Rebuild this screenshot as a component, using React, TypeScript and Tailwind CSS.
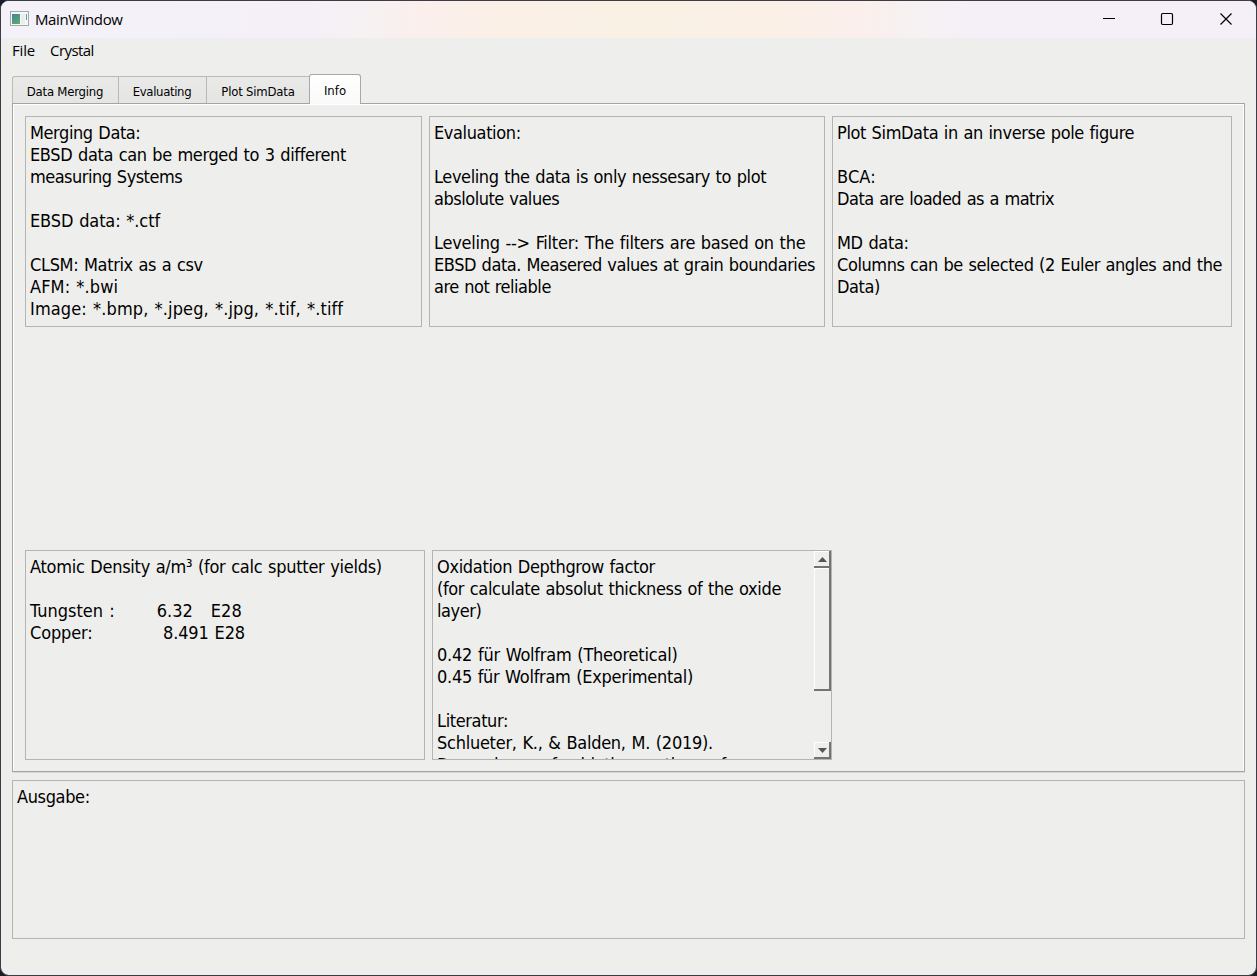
import React from "react";

type Line = [text: string, spacing?: string];

const tabs = [
  { label: "Data Merging", box: "w-[107px] rounded-tl-[3px] border-x", spacing: "tracking-[-0.22px]" },
  { label: "Evaluating", box: "w-[88px] border-r", spacing: "tracking-[-0.35px]" },
  { label: "Plot SimData", box: "w-[103px]", spacing: "tracking-[-0.2px]" },
];

const mergingLines: Line[] = [
  ["Merging Data:", "tracking-[-0.41px]"],
  ["EBSD data can be merged to 3 different", "tracking-[-0.36px]"],
  ["measuring Systems", "tracking-[-0.52px]"],
  [""],
  ["EBSD data: *.ctf", "tracking-[-0.12px]"],
  [""],
  ["CLSM: Matrix as a csv", "tracking-[-0.35px]"],
  ["AFM: *.bwi", "tracking-[0.11px]"],
  ["Image: *.bmp, *.jpeg, *.jpg, *.tif, *.tiff", "tracking-[0.12px]"],
];

const evaluationLines: Line[] = [
  ["Evaluation:", "tracking-[-0.38px]"],
  [""],
  ["Leveling the data is only nessesary to plot", "tracking-[-0.39px]"],
  ["abslolute values", "tracking-[-0.48px]"],
  [""],
  ["Leveling --> Filter: The filters are based on the", "tracking-[-0.26px]"],
  ["EBSD data. Measered values at grain boundaries", "tracking-[-0.44px]"],
  ["are not reliable", "tracking-[-0.48px]"],
];

const simDataLines: Line[] = [
  ["Plot SimData in an inverse pole figure", "tracking-[-0.38px]"],
  [""],
  ["BCA:", "tracking-[0.1px]"],
  ["Data are loaded as a matrix", "tracking-[-0.5px]"],
  [""],
  ["MD data:", "tracking-[-0.35px]"],
  ["Columns can be selected (2 Euler angles and the", "tracking-[-0.42px]"],
  ["Data)", "tracking-[-0.4px]"],
];

const densityLines: Line[] = [
  ["Atomic Density a/m³ (for calc sputter yields)", "tracking-[-0.27px]"],
  [""],
  ["Tungsten :       6.32   E28", "tracking-[0.02px]"],
  ["Copper:            8.491 E28", "tracking-[-0.13px]"],
];

const oxidationLines: Line[] = [
  ["Oxidation Depthgrow factor", "tracking-[-0.33px]"],
  ["(for calculate absolut thickness of the oxide", "tracking-[-0.35px]"],
  ["layer)", "tracking-[-0.42px]"],
  [""],
  ["0.42 für Wolfram (Theoretical)", "tracking-[-0.22px]"],
  ["0.45 für Wolfram (Experimental)", "tracking-[-0.28px]"],
  [""],
  ["Literatur:", "tracking-[-0.38px]"],
  ["Schlueter, K., & Balden, M. (2019).", "tracking-[-0.26px]"],
  ["Dependence of oxidation on the surface", "tracking-[-0.33px]"],
];

function TextLines({ lines }: { lines: Line[] }) {
  return (
    <div className="overflow-hidden pl-1 pt-[5px] text-lg leading-[22px] [word-spacing:0.85px]">
      {lines.map(([text, spacing = ""], i) => (
        <div key={i} className={`h-[22px] whitespace-pre ${spacing}`}>
          {text}
        </div>
      ))}
    </div>
  );
}

function TextPanel({ className, lines }: { className: string; lines: Line[] }) {
  return (
    <div className={`shrink-0 overflow-hidden border border-[#b4b4b4] ${className}`}>
      <TextLines lines={lines} />
    </div>
  );
}

function ScrollButton({ down = false }: { down?: boolean }) {
  return (
    <div className="flex h-[17px] w-[17px] items-center justify-center border-b-2 border-r-2 border-b-[#747474] border-r-[#747474] pl-px pt-[2px] shadow-[inset_1px_1px_0_#fff]">
      <svg width="9" height="5" viewBox="0 0 9 5" className={down ? "rotate-180" : ""}>
        <path d="M0 5L4.5 0L9 5Z" fill="#555" />
      </svg>
    </div>
  );
}

export default function App() {
  return (
    <div className="h-[976px] w-[1257px] overflow-hidden bg-[#1c1c26]">
      <div className="flex h-full w-full flex-col overflow-hidden rounded-[9px] border border-[#3c3c46] bg-[#eeeeec] text-black [font-family:'DejaVu_Sans_Condensed','DejaVu_Sans',sans-serif]">
        <header className="flex h-[37px] shrink-0 items-center bg-[linear-gradient(90deg,#f4f1f9_0px,#f5f0f8_310px,#f6f1f2_365px,#faefec_420px,#faf0e6_500px,#faf1e5_640px,#faf0e6_770px,#faefec_860px,#f6f1f2_920px,#f5f0f8_970px,#f5f0f8_100%)] pb-px pl-[9px] [font-family:'Open_Sans','Noto_Sans',sans-serif]">
          <svg className="mb-px" width="19" height="15" viewBox="0 0 19 15">
            <defs>
              <linearGradient id="app" x1="0" y1="0" x2="0.6" y2="1">
                <stop offset="0" stopColor="#477fa0" />
                <stop offset="1" stopColor="#5aa873" />
              </linearGradient>
            </defs>
            <rect x="0.5" y="0.5" width="18" height="14" fill="#f6f7f7" stroke="#a4a8ac" />
            <rect x="2" y="3" width="8" height="10" fill="url(#app)" />
            <rect x="11" y="3" width="4" height="10" fill="#e8edee" />
            <rect x="16" y="3" width="1" height="6" fill="#5c9f9c" />
          </svg>
          <span className="ml-[6px] text-[15px] leading-5 tracking-[-0.4px]">MainWindow</span>
          <svg className="ml-auto mr-[21px]" width="132" height="14" viewBox="0 0 132 14" fill="none" stroke="#000">
            <path d="M0 6.5H12" />
            <rect x="58.5" y="1.5" width="11" height="11" rx="1.2" strokeWidth="1.2" />
            <path d="M117.5 1.5L128.5 12.5M128.5 1.5L117.5 12.5" strokeWidth="1.2" />
          </svg>
        </header>
        <nav className="flex h-[26px] shrink-0 items-center pb-[2px] pl-[11px] text-[15px] [font-family:'Open_Sans','Noto_Sans',sans-serif]">
          <span className="w-[38px] tracking-[-0.2px]">File</span>
          <span className="tracking-[-0.55px]">Crystal</span>
        </nav>
        <div className="flex h-[39px] shrink-0 items-end pl-[11px] text-[13px]">
          {tabs.map((tab) => (
            <div
              key={tab.label}
              className={`flex h-[27px] items-center justify-center border-t border-[#b9b9b9] bg-[linear-gradient(#e9e9e8,#e5e5e4)] pr-px pt-[3px] ${tab.box}`}
            >
              <span className={`whitespace-pre ${tab.spacing}`}>{tab.label}</span>
            </div>
          ))}
          <div className="relative -mb-px -ml-px flex h-[30px] w-[52px] items-center justify-center rounded-t-[3px] border border-b-0 border-[#a8a8a8] bg-[linear-gradient(#fff,#fafafa)] pt-[3px]">
            Info
          </div>
        </div>
        <main className="ml-[11px] flex h-[669px] w-[1233px] shrink-0 flex-col border border-[#a5a5a5] pl-3 pt-3 shadow-[inset_1px_1px_0_#fff,inset_-1px_0_0_#fff,0_1px_0_#d8d8d8]">
          <div className="flex gap-[7px]">
            <TextPanel className="h-[211px] w-[397px]" lines={mergingLines} />
            <TextPanel className="h-[211px] w-[396px]" lines={evaluationLines} />
            <TextPanel className="h-[211px] w-[400px]" lines={simDataLines} />
          </div>
          <div className="mt-[223px] flex gap-[7px]">
            <TextPanel className="h-[210px] w-[400px]" lines={densityLines} />
            <div className="flex h-[210px] w-[400px] border border-[#b4b4b4]">
              <div className="h-[208px] w-[381px] overflow-hidden">
                <TextLines lines={oxidationLines} />
              </div>
              <div className="flex w-[17px] flex-col">
                <ScrollButton />
                <div className="h-[123px] border-b-2 border-r-2 border-b-[#747474] border-r-[#747474] shadow-[inset_1px_1px_0_#fff]" />
                <div className="mt-auto">
                  <ScrollButton down />
                </div>
              </div>
            </div>
          </div>
        </main>
        <TextPanel
          className="ml-[11px] mt-2 h-[159px] w-[1233px]"
          lines={[["Ausgabe:", "tracking-[-0.36px]"]]}
        />
      </div>
    </div>
  );
}
